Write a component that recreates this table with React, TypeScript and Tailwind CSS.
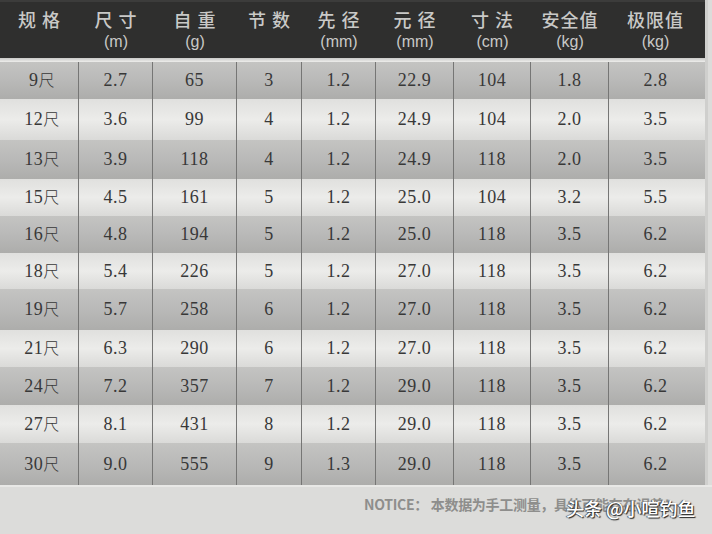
import React from "react";

const cols = [
  { w: "w-[79px]", top: "规 格", unit: "" },
  { w: "w-[74px]", top: "尺 寸", unit: "(m)" },
  { w: "w-[84px]", top: "自 重", unit: "(g)" },
  { w: "w-[65px]", top: "节 数", unit: "" },
  { w: "w-[74px]", top: "先 径", unit: "(mm)" },
  { w: "w-[78px]", top: "元 径", unit: "(mm)" },
  { w: "w-[77px]", top: "寸 法", unit: "(cm)" },
  { w: "w-[78px]", top: "安全值", unit: "(kg)" },
  { w: "w-[93px]", top: "极限值", unit: "(kg)" },
];

const rows = [
  { h: "h-[37px]", cells: ["9尺", "2.7", "65", "3", "1.2", "22.9", "104", "1.8", "2.8"] },
  { h: "h-[41px]", cells: ["12尺", "3.6", "99", "4", "1.2", "24.9", "104", "2.0", "3.5"] },
  { h: "h-[39px]", cells: ["13尺", "3.9", "118", "4", "1.2", "24.9", "118", "2.0", "3.5"] },
  { h: "h-[37px]", cells: ["15尺", "4.5", "161", "5", "1.2", "25.0", "104", "3.2", "5.5"] },
  { h: "h-[37px]", cells: ["16尺", "4.8", "194", "5", "1.2", "25.0", "118", "3.5", "6.2"] },
  { h: "h-[36px]", cells: ["18尺", "5.4", "226", "5", "1.2", "27.0", "118", "3.5", "6.2"] },
  { h: "h-[41px]", cells: ["19尺", "5.7", "258", "6", "1.2", "27.0", "118", "3.5", "6.2"] },
  { h: "h-[37px]", cells: ["21尺", "6.3", "290", "6", "1.2", "27.0", "118", "3.5", "6.2"] },
  { h: "h-[38px]", cells: ["24尺", "7.2", "357", "7", "1.2", "29.0", "118", "3.5", "6.2"] },
  { h: "h-[38px]", cells: ["27尺", "8.1", "431", "8", "1.2", "29.0", "118", "3.5", "6.2"] },
  { h: "h-[42px]", cells: ["30尺", "9.0", "555", "9", "1.3", "29.0", "118", "3.5", "6.2"] },
];

function Spec({ text }: { text: string }) {
  // digits in serif, the 尺 in CJK
  if (text.endsWith("尺")) {
    return (
      <span className="pl-[6px]">
        <span className="font-['Liberation_Serif',serif]">{text.slice(0, -1)}</span>
        <span className="font-['Noto_Sans_CJK_SC',sans-serif] text-[16px] font-light">尺</span>
      </span>
    );
  }
  return <span>{text}</span>;
}

export default function App() {
  return (
    <div className="w-[712px] h-[534px] bg-[#dcdcda] relative overflow-hidden">
      <div className="flex flex-col w-[708px] border-r-[3px] border-[#cfcfcd]">
        {/* header */}
        <div className="flex h-[58px] bg-[#2f2f2e] border-t-2 border-[#3c3c3b]">
          {cols.map((c, i) => (
            <div key={i} className={`${c.w} flex flex-col items-center pt-[6px] text-[#c9c9c7]`}>
              <span className="font-['Noto_Sans_CJK_SC',sans-serif] font-medium text-[18px] leading-[22px] tracking-[1px] whitespace-pre">
                {c.top}
              </span>
              <span className="mt-[4px] font-['Liberation_Sans',sans-serif] text-[16px] leading-[16px]">{c.unit}</span>
            </div>
          ))}
        </div>
        <div className="h-[4px] bg-linear-to-b from-[#c9c9c7] to-[#eeeeec]" />

        {/* body */}
        {rows.map((r, ri) => (
          <div
            key={ri}
            className={`flex ${r.h} ${
              ri % 2 === 0
                ? "bg-linear-to-b from-[#c4c4c2] via-[#b9b9b8] to-[#adadab]"
                : "bg-linear-to-b from-[#e0e0de] via-[#ececea] to-[#dadad8]"
            }`}
          >
            {r.cells.map((v, ci) => (
              <div
                key={ci}
                className={`${cols[ci].w} flex items-center justify-center text-[18px] text-[#383838] font-['Liberation_Serif',serif] tracking-[0.5px] ${
                  ci < 8 ? "border-r border-[#767675]" : ""
                }`}
              >
                <Spec text={v} />
              </div>
            ))}
          </div>
        ))}
      </div>

      {/* footer */}
      <div className="h-[49px] border-t-2 border-[#e8e8e6] flex items-start pl-[364px] pt-[7px]">
        <span className="font-['Noto_Sans_CJK_SC',sans-serif] text-[14px] font-bold text-[#8e8e8c] tracking-[-0.3px]">
          NOTICE： 本数据为手工测量，具体可能存在误差！
        </span>
      </div>

      {/* watermark */}
      <div className="absolute left-[566px] top-[496px] font-['Noto_Sans_CJK_SC',sans-serif] text-[18px] leading-[24px] font-medium text-white [text-shadow:1px_1px_1px_#222,-1px_0_1px_#444]">
        头条 @小喧钓鱼
      </div>
    </div>
  );
}
